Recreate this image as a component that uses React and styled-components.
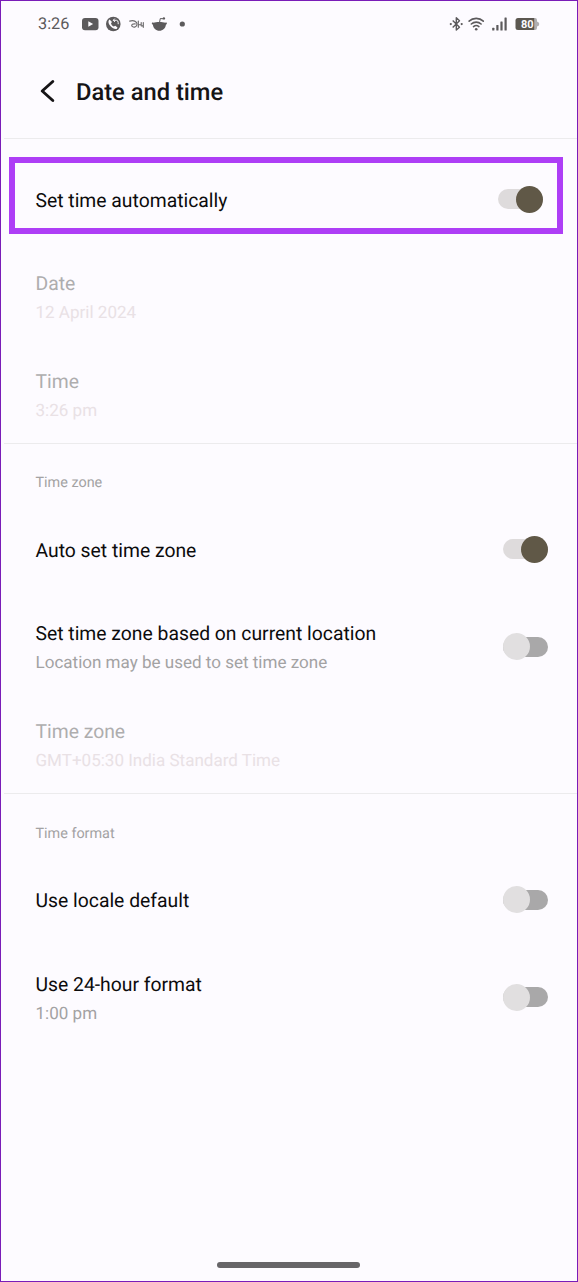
import React from "react";
import styled, { createGlobalStyle } from "styled-components";

const GlobalStyle = createGlobalStyle`
  * { box-sizing: border-box; }
  body { margin: 0; background: #fdfbff; font-family: Roboto, "Liberation Sans", sans-serif; text-rendering: geometricPrecision; }
`;

const Screen = styled.main`
  display: flex;
  flex-direction: column;
  width: 578px;
  height: 1282px;
  border: 1px solid #7a1cb8;
  background: #fdfbff;
  overflow: hidden;
`;

const StatusBar = styled.div`
  display: flex;
  align-items: center;
  justify-content: space-between;
  height: 45px;
  padding: 0 36px 0 37px;
  color: #5c5a5c;
`;

const Clock = styled.span`
  width: 43px;
  font-size: 16.3px;
  line-height: 20px;
`;

const StatusGroup = styled.div`
  display: flex;
  align-items: center;
`;

const Header = styled.header`
  display: flex;
  align-items: center;
  gap: 20px;
  height: 91.5px;
  padding: 0 38px;
`;

const BackButton = styled.button`
  display: flex;
  width: 17px;
  padding: 0 0 2px;
  border: 0;
  background: none;
  color: #161416;
`;

const Heading = styled.h1`
  margin: 0;
  padding-top: 1px;
  font-size: 23.7px;
  font-weight: 500;
  line-height: 28px;
  color: #161416;
`;

const Divider = styled.hr`
  flex: none;
  width: 573px;
  height: 1px;
  margin: 0 0 0 3px;
  border: 0;
  background: #ecebed;
`;

const Section = styled.section`
  display: flex;
  flex-direction: column;
  flex: none;
  height: ${(p) => p.$height}px;
  padding-top: ${(p) => p.$top || 0}px;
`;

const SectionLabel = styled.h2`
  flex: none;
  margin: 0;
  height: 57px;
  padding: 29.5px 34.5px 0;
  font-size: 14.4px;
  font-weight: 400;
  line-height: 20px;
  color: #a3a2a3;
`;

const Row = styled.div`
  display: flex;
  flex: none;
  align-items: center;
  justify-content: space-between;
  height: 97.5px;
  padding: 0 29px 0 34.5px;
`;

const HighlightedRow = styled(Row)`
  height: 77px;
  margin: 0 14px 14.5px 8px;
  padding: 8px 14px 0 20.5px;
  border: 6px solid #ae3ef6;
`;

const Texts = styled.div`
  display: flex;
  flex-direction: column;
  gap: 5px;
  padding-top: ${(p) => (p.$single ? 2 : 2.5)}px;
`;

const Title = styled.span`
  font-size: 19.33px;
  line-height: 25px;
  color: ${(p) => (p.$disabled ? "#aeadae" : "#0c0b0c")};
`;

const Detail = styled.span`
  font-size: 17.05px;
  line-height: 24px;
  color: ${(p) => (p.$disabled ? "#e9e1e5" : "#a3a2a3")};
`;

const Track = styled.button`
  display: flex;
  align-items: center;
  justify-content: ${(p) => (p.$on ? "flex-end" : "flex-start")};
  width: 45px;
  height: 20px;
  padding: 0;
  border: 0;
  border-radius: 10px;
  background: ${(p) => (p.$on ? "#dedbdc" : "#a9a8a9")};
`;

const Thumb = styled.span`
  flex: none;
  width: 27px;
  height: 27px;
  border-radius: 50%;
  background: ${(p) => (p.$on ? "#605847" : "#e1dfe0")};
`;

const NavArea = styled.footer`
  display: flex;
  justify-content: center;
  margin-top: auto;
  height: 19px;
  padding-right: 1px;
`;

const NavHandle = styled.div`
  width: 143px;
  height: 5.5px;
  border-radius: 3px;
  background: #676568;
`;

function Toggle({ on, label }) {
  return (
    <Track type="button" role="switch" aria-checked={!!on} aria-label={label} $on={on}>
      <Thumb $on={on} />
    </Track>
  );
}

function Setting({ as: Container = Row, title, detail, disabled, toggle, on }) {
  return (
    <Container>
      <Texts $single={!detail}>
        <Title $disabled={disabled}>{title}</Title>
        {detail && <Detail $disabled={disabled}>{detail}</Detail>}
      </Texts>
      {toggle && <Toggle on={on} label={title} />}
    </Container>
  );
}

function NotificationIcons() {
  return (
    <svg width="106" height="20" viewBox="81 13 106 20" fill="none">
      <rect x="82" y="17" width="16.5" height="12.2" rx="3" fill="#5c5a5c" />
      <path d="M88.3 20.3v5.4l4.8-2.7z" fill="#fdfbff" />
      <circle cx="113.3" cy="23" r="7.3" fill="#5c5a5c" />
      <path d="M109.6 18.5c-1.8 1.100-1.300 4.200.8 6.500s4.900 3.700 6.500 2.700l.6-1.300-2.200-1.600-1.500.8c-1.500-.7-2.500-1.900-2.800-3.400l1-1.300z" fill="#fdfbff" />
      <path d="M114.800 17.600l-1.600 1.700 1.800 1.500M113.400 19.300h3.200q1.600.2 1.600 2.400v1.500" stroke="#fdfbff" strokeWidth="1" />
      <g stroke="#6c6a6c" strokeWidth="1.150" strokeLinecap="round" strokeLinejoin="round">
        <path d="M129.700 20.100c2.200-.6 5.300-.5 6.700 1.300 1.100 1.500.6 4.400-1.700 4.700-1.700.2-3.200-.8-3-2.100.2-1.200 1.700-1.200 3.500-1.100" />
        <path d="M138.300 20v6.200M138.300 23.700h2.900M141.200 21.600v3.200M143.300 21.600v4.700M141.200 24.800q1.200.6 2.100-.6" />
      </g>
      <path d="M153.400 21.800c2.600-1 9.300-1 11.900 0 .7-.8 1.800-.4 1.600.8-.1.6-.5 1-1 1.100-.4 3.600-3 6-6.500 6s-6.100-2.400-6.500-6c-1-.2-1.300-1.200-.9-1.900.3-.5 1-.5 1.400 0z" fill="#5c5a5c" />
      <path d="M159.500 21.500l.8-4 2.800.3" stroke="#5c5a5c" strokeWidth="1" />
      <circle cx="163.900" cy="17.400" r="1.200" fill="#5c5a5c" />
      <circle cx="182.300" cy="23" r="2.600" fill="#5c5a5c" />
    </svg>
  );
}

const BatteryLevel = styled.text`
  font-family: Roboto, "Liberation Sans", sans-serif;
  font-size: 11px;
  font-weight: 700;
  fill: #fdfbff;
`;

function SystemIcons() {
  return (
    <svg width="92" height="20" viewBox="449 13 92 20" fill="none">
      <path d="M452.700 19.600l6.800 6.600-3.200 2.900V16.800l3.200 3-6.800 6.700" stroke="#5c5a5c" strokeWidth="1.400" strokeLinejoin="round" />
      <circle cx="450.800" cy="23.100" r="1.100" fill="#5c5a5c" />
      <circle cx="461.700" cy="23.100" r="1.100" fill="#5c5a5c" />
      <g stroke="#5c5a5c" strokeWidth="1.600" strokeLinecap="round">
        <path d="M469.100 20.100c3.900-3.700 10.300-3.700 14.200 0" />
        <path d="M471.300 23c2.800-2.500 7-2.500 9.800 0" />
        <path d="M473.500 25.600c1.600-1.300 3.800-1.300 5.400 0" />
      </g>
      <circle cx="476.200" cy="28.300" r="1.300" fill="#5c5a5c" />
      <g fill="#5c5a5c">
        <rect x="492.200" y="26.800" width="2.200" height="2.800" rx=".5" />
        <rect x="496.300" y="24" width="2.200" height="5.600" rx=".5" />
        <rect x="500.400" y="20.500" width="2.200" height="9.100" rx=".5" />
        <rect x="504.500" y="16.600" width="2.200" height="13" rx=".5" />
      </g>
      <path d="M532 17h3q2 0 2 2v1.500q2.300.5 2.300 2.500t-2.300 2.500V27q0 2-2 2h-3z" fill="#b1afb1" />
      <path d="M518 17h16.200v12H518q-2.500 0-2.500-2.500v-7q0-2.500 2.500-2.500z" fill="#5c5750" />
      <BatteryLevel x="521" y="27">80</BatteryLevel>
    </svg>
  );
}

export default function App() {
  return (
    <>
      <GlobalStyle />
      <Screen>
        <StatusBar>
          <StatusGroup>
            <Clock>3:26</Clock>
            <NotificationIcons />
          </StatusGroup>
          <SystemIcons />
        </StatusBar>
        <Header>
          <BackButton type="button" aria-label="Back">
            <svg width="17" height="24" viewBox="0 0 17 24" fill="none">
              <path d="M13.800 2.500L3.200 12l10.600 9.500" stroke="currentColor" strokeWidth="2.900" strokeLinecap="round" strokeLinejoin="round" />
            </svg>
          </BackButton>
          <Heading>Date and time</Heading>
        </Header>
        <Divider />
        <Section $height={304} $top={18}>
          <Setting as={HighlightedRow} title="Set time automatically" toggle on />
          <Setting title="Date" detail="12 April 2024" disabled />
          <Setting title="Time" detail="3:26 pm" disabled />
        </Section>
        <Divider />
        <Section $height={349.5}>
          <SectionLabel>Time zone</SectionLabel>
          <Setting title="Auto set time zone" toggle on />
          <Setting
            title="Set time zone based on current location"
            detail="Location may be used to set time zone"
            toggle
          />
          <Setting title="Time zone" detail="GMT+05:30 India Standard Time" disabled />
        </Section>
        <Divider />
        <Section $height={252}>
          <SectionLabel>Time format</SectionLabel>
          <Setting title="Use locale default" toggle />
          <Setting title="Use 24-hour format" detail="1:00 pm" toggle />
        </Section>
        <NavArea>
          <NavHandle />
        </NavArea>
      </Screen>
    </>
  );
}
